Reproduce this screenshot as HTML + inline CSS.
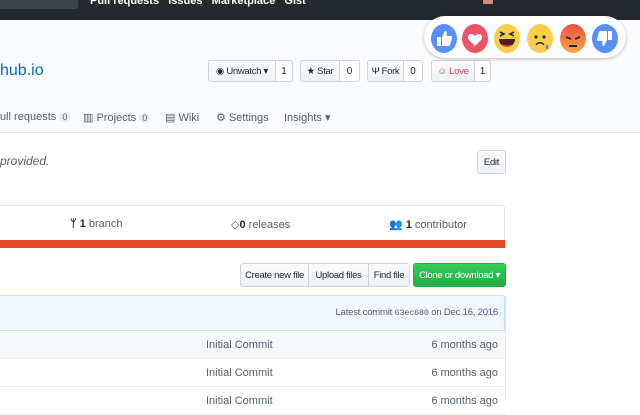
<!DOCTYPE html>
<html><head><style>
body{margin:0;width:640px;height:400px;overflow:hidden;background:#fff;font-family:"Liberation Sans",sans-serif;font-size:11px;color:#24292e;position:relative}
.a{position:absolute;white-space:nowrap}
.btn{position:absolute;box-sizing:border-box;border:1px solid #d1d5da;background:linear-gradient(#fafbfc,#eff3f6);border-radius:3px;font-size:9.5px;letter-spacing:-0.3px;display:flex;align-items:center;justify-content:center;white-space:nowrap}
.cnt{position:absolute;box-sizing:border-box;border:1px solid #d1d5da;background:#fff;border-left:none;border-radius:0 3px 3px 0;font-size:10px;display:flex;align-items:center;justify-content:center}
.row{position:absolute;left:0;width:505px;height:28px;border-bottom:1px solid #eaecef;box-sizing:border-box;font-size:11px;color:#586069}
.e{position:absolute;width:26px;height:29px;border-radius:50%;top:24px;overflow:hidden}
</style></head><body>
<div class="a" style="left:0;top:0;width:640px;height:20px;background:#24292e"></div>
<div class="a" style="left:0;top:0;width:78px;height:9px;background:#3f4448;border-radius:0 0 3px 0"></div>
<div class="a" style="left:90px;top:-5px;color:#fff;font-weight:bold;font-size:11px">Pull requests &nbsp; Issues &nbsp; Marketplace &nbsp; Gist</div>
<div class="a" style="left:483px;top:0;width:10px;height:4px;background:#c88"></div>
<div class="a" style="left:0;top:20px;width:640px;height:112px;background:#fafbfc;border-bottom:1px solid #e1e4e8"></div>
<div class="a" style="left:0;top:62px;font-size:16px;color:#0366d6">hub.io</div>
<div class="btn" style="left:208px;top:60px;width:68px;height:22px;border-radius:3px 0 0 3px">◉ Unwatch ▾</div>
<div class="cnt" style="left:276px;top:60px;width:17px;height:22px">1</div>
<div class="btn" style="left:300px;top:60px;width:40px;height:22px;border-radius:3px 0 0 3px">★ Star</div>
<div class="cnt" style="left:340px;top:60px;width:20px;height:22px">0</div>
<div class="btn" style="left:367px;top:60px;width:37px;height:22px;border-radius:3px 0 0 3px">Ψ Fork</div>
<div class="cnt" style="left:404px;top:60px;width:19px;height:22px">0</div>
<div class="btn" style="left:431px;top:60px;width:44px;height:22px;border-radius:3px 0 0 3px;color:#e0405a">☺ Love</div>
<div class="cnt" style="left:475px;top:60px;width:16px;height:22px">1</div>
<div class="a" style="left:0;top:111px;color:#586069;font-size:11px">ull requests <span style="background:#eaecef;border-radius:8px;padding:0 3px;font-size:9px">0</span></div>
<div class="a" style="left:83px;top:111px;color:#586069">▥ Projects <span style="background:#eaecef;border-radius:8px;padding:0 3px;font-size:9px">0</span></div>
<div class="a" style="left:165px;top:111px;color:#586069">▤ Wiki</div>
<div class="a" style="left:216px;top:111px;color:#586069">⚙ Settings</div>
<div class="a" style="left:284px;top:111px;color:#586069">Insights ▾</div>
<div class="a" style="left:0;top:154px;font-style:italic;color:#586069;font-size:12px">provided.</div>
<div class="btn" style="left:477px;top:150px;width:29px;height:24px">Edit</div>
<div class="a" style="left:-2px;top:205px;width:507px;height:42px;border:1px solid #e1e4e8;border-radius:3px;box-sizing:border-box"></div>
<div class="a" style="left:0;top:240px;width:505px;height:8px;background:#e34c26"></div>
<div class="a" style="left:70px;top:218px;color:#586069"><b style="color:#24292e">ᛘ 1</b> branch</div>
<div class="a" style="left:231px;top:218px;color:#586069">◇<b style="color:#24292e">0</b> releases</div>
<div class="a" style="left:389px;top:218px;color:#586069"><b style="color:#24292e">👥 1</b> contributor</div>
<div class="btn" style="left:240px;top:263px;width:69px;height:24px;border-radius:3px 0 0 3px">Create new file</div>
<div class="btn" style="left:308px;top:263px;width:61px;height:24px;border-radius:0">Upload files</div>
<div class="btn" style="left:368px;top:263px;width:42px;height:24px;border-radius:0 3px 3px 0">Find file</div>
<div class="btn" style="left:413px;top:263px;width:93px;height:24px;background:linear-gradient(#34d058,#28a745);border-color:#28a745;color:#fff">Clone or download ▾</div>
<div class="a" style="left:-2px;top:295px;width:507px;height:36px;background:#f1f8ff;border:1px solid #c8e1ff;box-sizing:border-box;border-radius:3px 3px 0 0"></div>
<div class="a" style="right:142px;top:307px;font-size:9.5px;letter-spacing:-0.2px;color:#586069">Latest commit <span style="font-family:'Liberation Mono';font-size:8.5px">63ec680</span> on Dec 16, 2016</div>
<div class="row" style="top:331px;background:#f6f8fa"><span class="a" style="left:206px;top:8px">Initial Commit</span><span class="a" style="right:7px;top:8px">6 months ago</span></div>
<div class="row" style="top:359px"><span class="a" style="left:206px;top:8px">Initial Commit</span><span class="a" style="right:7px;top:8px">6 months ago</span></div>
<div class="row" style="top:387px"><span class="a" style="left:206px;top:8px">Initial Commit</span><span class="a" style="right:7px;top:8px">6 months ago</span></div>
<div class="a" style="left:505px;top:295px;width:1px;height:105px;background:#e1e4e8"></div>
<div class="a" style="left:424px;top:16px;width:202px;height:42px;background:#fff;border-radius:21px;box-shadow:0 1px 3px rgba(0,0,0,.25)"></div>
<div class="e" style="left:431px;background:#5890ff"><svg width="26" height="29"><path d="M6 13h4v9H6z M11 13l3-6c2 0 2 2 1.5 5H20c1 0 1.5 1 1 2l-2 7c-.3 1-1 1-2 1h-6z" fill="#fff"/></svg></div>
<div class="e" style="left:462px;background:#f25268"><svg width="26" height="29"><path d="M13 22l-6-6c-2-2-1-6 2-6 2 0 3 1 4 2 1-1 2-2 4-2 3 0 4 4 2 6z" fill="#fff"/></svg></div>
<div class="e" style="left:494px;background:#fbcd4a"><svg width="26" height="29"><path d="M6 8l4 2-4 2M20 8l-4 2 4 2" stroke="#262c38" stroke-width="1.6" fill="none"/><path d="M5 15h16c0 5-4 8-8 8s-8-3-8-8z" fill="#4b1f1f"/><path d="M8 20c2 2 8 2 10 0c-1 2-3 3-5 3s-4-1-5-3z" fill="#f55"/></svg></div>
<div class="e" style="left:527px;background:#fbcd4a"><svg width="26" height="29"><circle cx="9" cy="13" r="1.6" fill="#262c38"/><circle cx="17" cy="13" r="1.6" fill="#262c38"/><path d="M9 21c2-3 6-3 8 0" stroke="#262c38" stroke-width="1.5" fill="none"/><path d="M20 20c-2 3-2 5 0 5s2-2 0-5z" fill="#4a90e2"/></svg></div>
<div class="e" style="left:560px;background:linear-gradient(#ee4e3f,#f9a84a)"><svg width="26" height="29"><path d="M6 13l5 2M20 13l-5 2" stroke="#262c38" stroke-width="2"/><path d="M9 22h8" stroke="#262c38" stroke-width="2"/></svg></div>
<div class="e" style="left:592px;background:#5890ff"><svg width="26" height="29"><path d="M16 7h4v9h-4z M15 16l-3 6c-2 0-2-2-1.5-5H6c-1 0-1.5-1-1-2l2-7c.3-1 1-1 2-1h6z" fill="#fff"/></svg></div>
</body></html>
